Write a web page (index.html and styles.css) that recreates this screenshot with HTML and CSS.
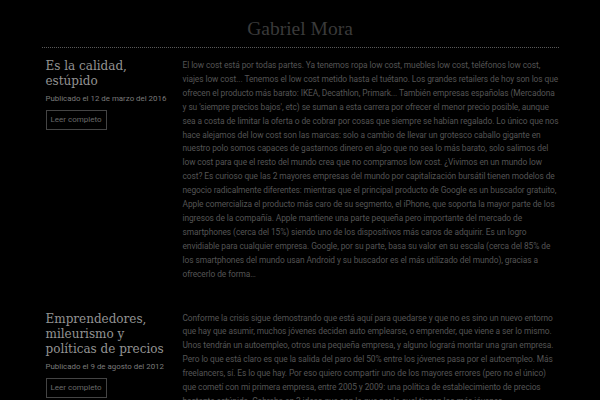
FILE: index.html
```html
<!DOCTYPE html>
<html lang="es">
<head>
  <meta charset="UTF-8" />
  <meta name="viewport" content="width=device-width, initial-scale=1.0" />
  <title>Gabriel Mora</title>
  <link rel="stylesheet" href="styles.css">
</head>
<body>
  <div class="page">
    <header class="site-header">
      <h1 class="site-title">Gabriel Mora</h1>
    </header>

    <div class="post">
      <div class="post-side">
        <h2 class="post-title">Es la calidad, estúpido</h2>
        <p class="post-date">Publicado el 12 de marzo del 2016</p>
        <a class="read-more" href="#">Leer completo</a>
      </div>
      <div class="post-body">
        <p>El low cost está por todas partes. Ya tenemos ropa low cost, muebles low cost, teléfonos low cost, viajes low cost... Tenemos el low cost metido hasta el tuétano. Los grandes retailers de hoy son los que ofrecen el producto más barato: IKEA, Decathlon, Primark... También empresas españolas (Mercadona y su 'siempre precios bajos', etc) se suman a esta carrera por ofrecer el menor precio posible, aunque sea a costa de limitar la oferta o de cobrar por cosas que siempre se habían regalado. Lo único que nos hace alejamos del low cost son las marcas: solo a cambio de llevar un grotesco caballo gigante en nuestro polo somos capaces de gastarnos dinero en algo que no sea lo más barato, solo salimos del low cost para que el resto del mundo crea que no compramos low cost. ¿Vivimos en un mundo low cost? Es curioso que las 2 mayores empresas del mundo por capitalización bursátil tienen modelos de negocio radicalmente diferentes: mientras que el principal producto de Google es un buscador gratuito, Apple comercializa el producto más caro de su segmento, el iPhone, que soporta la mayor parte de los ingresos de la compañía. Apple mantiene una parte pequeña pero importante del mercado de smartphones (cerca del 15%) siendo uno de los dispositivos más caros de adquirir. Es un logro envidiable para cualquier empresa. Google, por su parte, basa su valor en su escala (cerca del 85% de los smartphones del mundo usan Android y su buscador es el más utilizado del mundo), gracias a ofrecerlo de forma…</p>
      </div>
    </div>

    <div class="post">
      <div class="post-side">
        <h2 class="post-title">Emprendedores, mileurismo y políticas de precios</h2>
        <p class="post-date">Publicado el 9 de agosto del 2012</p>
        <a class="read-more" href="#">Leer completo</a>
      </div>
      <div class="post-body">
        <p>Conforme la crisis sigue demostrando que está aquí para quedarse y que no es sino un nuevo entorno que hay que asumir, muchos jóvenes deciden auto emplearse, o emprender, que viene a ser lo mismo. Unos tendrán un autoempleo, otros una pequeña empresa, y alguno logrará montar una gran empresa. Pero lo que está claro es que la salida del paro del 50% entre los jóvenes pasa por el autoempleo. Más freelancers, sí. Es lo que hay. Por eso quiero compartir uno de los mayores errores (pero no el único) que cometí con mi primera empresa, entre 2005 y 2009: una política de establecimiento de precios bastante estúpida. Cobraba en 2 ideas que son la que por la cual tienen los más jóvenes emprendedores…</p>
      </div>
    </div>
  </div>
</body>
</html>
```

FILE: styles.css
```css
body {
  margin: 0;
  background-color: #000;
  color: #545454;
  font-family: Roboto, "Liberation Sans", sans-serif;
}
.page {
  width: 517px;
  margin: 0 auto;
}
.site-header {
  padding-top: 17px;
  padding-bottom: 6px;
  border-bottom: 1px dotted #5a5a5a;
  text-align: center;
}
.site-title {
  margin: 0;
  font-family: "Liberation Serif", serif;
  font-weight: normal;
  font-size: 19.5px;
  line-height: 24px;
  color: #3a3a3a;
}
.post {
  display: flex;
  gap: 8px;
  padding: 11px 0 19px 4px;
}
.post-side {
  width: 129px;
  flex-shrink: 0;
}
.post-title {
  margin: 0;
  font-family: "DejaVu Serif", serif;
  font-weight: normal;
  font-size: 12px;
  line-height: 15px;
  color: #939393;
}
.post-date {
  margin: 4px 0 0;
  font-size: 7.9px;
  line-height: 12px;
  white-space: nowrap;
  color: #7a7a7a;
}
.read-more {
  display: inline-block;
  margin-top: 5px;
  padding: 4px 4px;
  border: 1px solid #444;
  font-size: 8px;
  line-height: 10px;
  color: #6a6a6a;
  text-decoration: none;
}
.post-body {
  flex: 1;
}
.post-body p {
  margin: 0;
  font-size: 8.4px;
  line-height: 13.9px;
  letter-spacing: -0.08px;
}
```
